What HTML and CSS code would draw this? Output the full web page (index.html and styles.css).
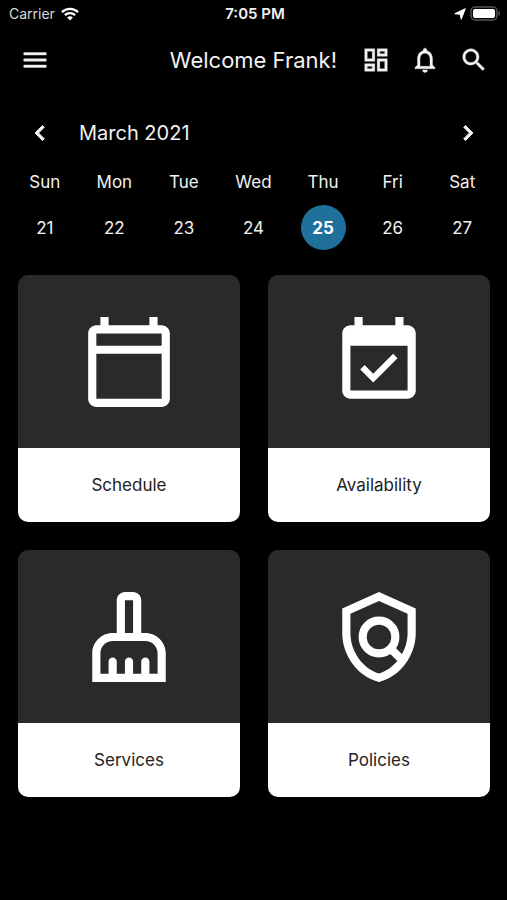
FILE: index.html
```html
<!DOCTYPE html>
<html lang="en">
<head>
  <meta charset="utf-8">
  <meta name="viewport" content="width=device-width, initial-scale=1">
  <title>Welcome</title>
  <link rel="stylesheet" href="styles.css">
</head>
<body>
  <div class="status">
    <div class="status-left">
      <span>Carrier</span>
      <svg class="wifi" viewBox="0 0 18 14" aria-hidden="true">
        <path class="arc" d="M1 5.2a11.3 11.3 0 0 1 16 0M3.9 8.2a7.2 7.2 0 0 1 10.2 0"/>
        <path d="M9 13.5 6.1 10.6a4.1 4.1 0 0 1 5.8 0z"/>
      </svg>
    </div>
    <span class="time">7:05 PM</span>
    <div class="status-right">
      <svg class="location" viewBox="0 0 12 12" aria-hidden="true"><path d="M11.300.700 7.200 11.300 6.200 6.200.700 5.800z"/></svg>
      <svg class="battery" viewBox="0 0 31 15" aria-hidden="true">
        <rect class="case" x="1" y="1" width="26" height="13" rx="4"/>
        <rect x="3" y="3" width="22" height="9" rx="2"/>
        <path class="tip" d="M28.500 5v5c2-.8 2-4.200 0-5z"/>
      </svg>
    </div>
  </div>

  <header class="bar">
    <button class="icon-button" aria-label="Menu"><svg viewBox="0 0 24 24"><path d="M3 18h18v-2H3v2zm0-5h18v-2H3v2zm0-7v2h18V6H3z"/></svg></button>
    <h1 class="title">Welcome Frank!</h1>
    <div class="actions">
      <button class="icon-button" aria-label="Dashboard"><svg viewBox="0 0 24 24"><path d="M19 5v2h-4V5h4M9 5v6H5V5h4m10 8v6h-4v-6h4M9 17v2H5v-2h4M21 3h-8v6h8V3zM11 3H3v10h8V3zm10 8h-8v10h8V11zm-10 4H3v6h8v-6z"/></svg></button>
      <button class="icon-button" aria-label="Notifications"><svg viewBox="0 0 24 24"><path d="M12 22c1.100 0 2-.9 2-2h-4c0 1.100.9 2 2 2zm6-6v-5c0-3.070-1.630-5.640-4.500-6.320V4c0-.83-.67-1.500-1.500-1.500s-1.500.67-1.500 1.500v.68C7.640 5.360 6 7.920 6 11v5l-2 2v1h16v-1l-2-2zm-2 1H8v-6c0-2.480 1.510-4.500 4-4.500s4 2.020 4 4.500v6z"/></svg></button>
      <button class="icon-button" aria-label="Search"><svg viewBox="0 0 24 24"><path d="M15.500 14h-.79l-.28-.27C15.410 12.590 16 11.110 16 9.500 16 5.910 13.090 3 9.500 3S3 5.910 3 9.500 5.910 16 9.500 16c1.610 0 3.090-.59 4.230-1.570l.27.28v.79l5 4.990L20.490 19l-4.990-5zm-6 0C7.010 14 5 11.990 5 9.500S7.010 5 9.500 5 14 7.010 14 9.500 11.990 14 9.500 14z"/></svg></button>
    </div>
  </header>

  <main>
    <section class="calendar" aria-label="Calendar">
      <div class="month">
        <button class="icon-button chevron" aria-label="Previous week"><svg viewBox="0 0 24 24"><path d="M15.410 7.410 14 6l-6 6 6 6 1.410-1.410L10.830 12z"/></svg></button>
        <h2 class="month-name">March 2021</h2>
        <button class="icon-button chevron" aria-label="Next week"><svg viewBox="0 0 24 24"><path d="M10 6 8.590 7.410 13.170 12l-4.580 4.590L10 18l6-6z"/></svg></button>
      </div>
      <table class="week">
        <thead>
          <tr><th>Sun</th><th>Mon</th><th>Tue</th><th>Wed</th><th>Thu</th><th>Fri</th><th>Sat</th></tr>
        </thead>
        <tbody>
          <tr>
            <td><button class="day">21</button></td>
            <td><button class="day">22</button></td>
            <td><button class="day">23</button></td>
            <td><button class="day">24</button></td>
            <td><button class="day selected" aria-current="date">25</button></td>
            <td><button class="day">26</button></td>
            <td><button class="day">27</button></td>
          </tr>
        </tbody>
      </table>
    </section>

    <nav class="tiles" aria-label="Sections">
      <a class="tile" href="#schedule">
        <span class="art"><svg viewBox="0 0 24 24" aria-hidden="true"><path d="M20 3h-1V1h-2v2H7V1H5v2H4c-1.100 0-2 .9-2 2v16c0 1.100.9 2 2 2h16c1.100 0 2-.9 2-2V5c0-1.100-.9-2-2-2zm0 18H4V10h16v11zm0-13H4V5h16v3z"/></svg></span>
        <span class="label">Schedule</span>
      </a>
      <a class="tile" href="#availability">
        <span class="art"><svg viewBox="0 0 24 24" aria-hidden="true"><path d="M16.530 11.060 15.470 10l-4.880 4.880-2.120-2.120-1.060 1.060L10.590 17l5.940-5.940zM19 3h-1V1h-2v2H8V1H6v2H5c-1.110 0-1.990.9-1.990 2L3 19c0 1.100.89 2 2 2h14c1.100 0 2-.9 2-2V5c0-1.100-.9-2-2-2zm0 16H5V8h14v11z"/></svg></span>
        <span class="label">Availability</span>
      </a>
      <a class="tile" href="#services">
        <span class="art"><svg viewBox="0 0 24 24" aria-hidden="true"><path d="M16 11h-1V3c0-1.100-.9-2-2-2h-2c-1.100 0-2 .9-2 2v8H8c-2.760 0-5 2.240-5 5v7h18v-7c0-2.760-2.240-5-5-5zm-5-8h2v8h-2V3zm8 18h-2v-3c0-.55-.45-1-1-1s-1 .45-1 1v3h-2v-3c0-.55-.45-1-1-1s-1 .45-1 1v3H9v-3c0-.55-.45-1-1-1s-1 .45-1 1v3H5v-5c0-1.650 1.350-3 3-3h8c1.650 0 3 1.350 3 3v5z"/></svg></span>
        <span class="label">Services</span>
      </a>
      <a class="tile" href="#policies">
        <span class="art"><svg viewBox="0 0 24 24" aria-hidden="true">
          <path fill-rule="evenodd" d="M12 1 3 5v6c0 5.550 3.840 10.740 9 12 5.160-1.260 9-6.450 9-12V5zM5 6.300l7-3.110 7 3.110V11c0 4.520-2.980 8.690-7 9.930C7.980 19.690 5 15.520 5 11z"/>
          <path class="lens" d="M16 12a4 4 0 1 1-8 0 4 4 0 0 1 8 0M14.800 14.800l3 3"/>
        </svg></span>
        <span class="label">Policies</span>
      </a>
    </nav>
  </main>
</body>
</html>
```

FILE: styles.css
```css
* {
  box-sizing: border-box;
}

body {
  margin: 0;
  min-height: 100vh;
  background: #000;
  color: #f2f2f2;
  font-family: Inter, "Liberation Sans", sans-serif;
}

svg {
  display: block;
  fill: currentColor;
}

button {
  padding: 0;
  border: 0;
  background: none;
  color: inherit;
  font: inherit;
  cursor: pointer;
}

.status {
  display: grid;
  grid-template-columns: 1fr auto 1fr;
  align-items: center;
  height: 27px;
  padding: 0 6px 0 9px;
  font-size: 14px;
}

.status-left,
.status-right {
  display: flex;
  align-items: center;
  gap: 6px;
  color: #d8d8d8;
}

.status-right {
  justify-content: flex-end;
  gap: 4px;
  color: #fff;
}

.time {
  font-size: 15px;
  font-weight: 600;
}

.wifi {
  width: 18px;
  height: 14px;
  color: #fff;
}

.arc {
  fill: none;
  stroke: currentColor;
  stroke-width: 2.4;
}

.location {
  width: 12px;
  height: 12px;
  stroke: currentColor;
  stroke-linejoin: round;
}

.battery {
  width: 31px;
  height: 15px;
}

.case {
  fill: none;
  stroke: #555;
  stroke-width: 1.5;
}

.tip {
  fill: #555;
}

.bar {
  display: flex;
  align-items: center;
  height: 65px;
  padding: 0 18px 0 20px;
}

.icon-button svg {
  width: 30px;
  height: 30px;
  stroke: currentColor;
  stroke-width: 0.3;
}

.chevron svg {
  stroke-width: 0.8;
}

.title {
  flex: 1;
  margin: 0 24px 0 0;
  font-size: 22px;
  font-weight: 400;
  text-align: right;
}

.actions {
  display: flex;
  gap: 19px;
}

.calendar {
  padding: 16px 10px 0;
}

.month {
  display: flex;
  align-items: center;
  gap: 24px;
  height: 50px;
  padding: 0 14px 0 15px;
}

.month-name {
  flex: 1;
  margin: 0;
  font-size: 20px;
  font-weight: 400;
}

.week {
  width: 100%;
  table-layout: fixed;
  border-collapse: collapse;
  font-size: 17px;
  text-align: center;
}

.week th {
  height: 47px;
  padding: 0;
  font-weight: 400;
}

.week td {
  padding: 0;
}

.day {
  display: block;
  width: 45px;
  height: 45px;
  margin: 0 auto;
  border-radius: 50%;
}

.selected {
  background: #20709c;
  color: #fff;
  font-weight: 700;
}

.tiles {
  display: grid;
  grid-template-columns: 1fr 1fr;
  gap: 28px;
  padding: 25px 17px 25px 18px;
}

.tile {
  color: #222;
  font-size: 17px;
  text-decoration: none;
}

.art {
  display: grid;
  place-items: center;
  height: 173px;
  border-radius: 10px 10px 0 0;
  background: #2a2a2a;
  color: #fff;
}

.art svg {
  width: 98px;
  height: 98px;
}

.lens {
  fill: none;
  stroke: currentColor;
  stroke-width: 2;
}

.label {
  display: grid;
  place-items: center;
  height: 74px;
  border-radius: 0 0 10px 10px;
  background: #fff;
}
```
